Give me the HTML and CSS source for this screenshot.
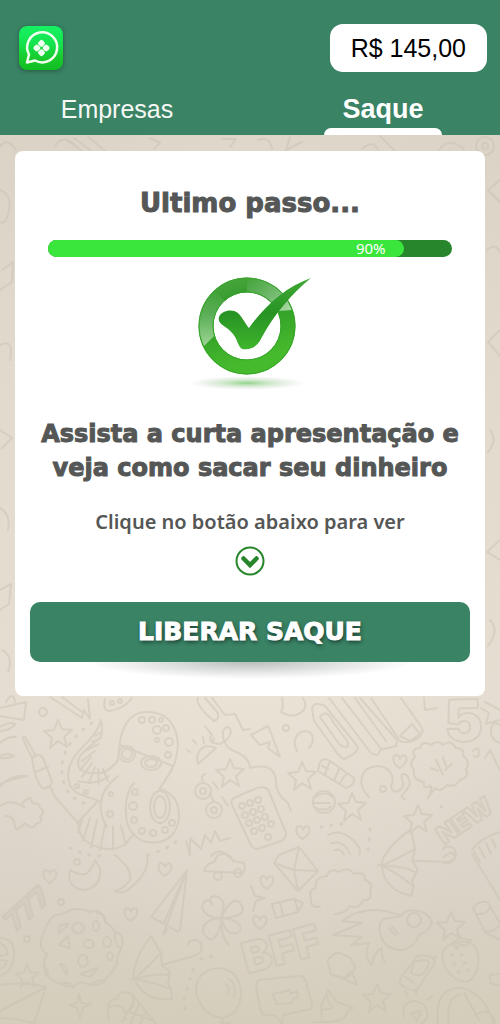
FILE: index.html
```html
<!DOCTYPE html>
<html lang="pt-BR">
<head>
<meta charset="utf-8">
<meta name="viewport" content="width=device-width, initial-scale=1">
<title>Saque</title>
<link rel="stylesheet" href="styles.css">
</head>
<body>
<svg class="doodles" viewBox="0 0 500 1024" preserveAspectRatio="xMidYMin slice" aria-hidden="true">
  <defs>
    <path id="star" d="M0-14L4-5 14-4 6 3 9 13 0 7-8 14-6 4-14-3-4-4Z"/>
    <path id="heart" d="M0 7C-8 3-8-5-4-6-1-6 0-3 0-2 1-6 5-7 6-4 8 0 4 4 0 7Z"/>
    <g id="umbrella"><path d="M-13-33C-31-10-32 8-29 11-23 25-12 32 8 30L7 20 4 15 6 3-2-4-3-16Z"/><path d="M-28 9Q-14-4-3-16M-29 10Q-8 4 4 6M-29 10Q-8 14 7 20M-33 11L-29 9M-2-4L30-13C42-17 38-30 30-29Q24-28 24-24"/></g>
  </defs>
  <!-- strip above and beside the card -->
  <path d="M0 146Q8 137 16 150M55 146Q64 132 78 148M66 140L85 153M74 138L94 153M88 137L108 153M150 138L160 143 154 149M222 139L236 139 230 147M258 140Q270 136 272 149M290 137L286 150 302 142M362 149Q374 138 379 152M380 136L396 152M438 152Q448 135 464 149"/>
  <circle cx="485" cy="146" r="9"/><circle cx="485" cy="146" r="3"/>
  <path d="M0 190Q12 194 9 210T0 222M2 270L13 262 12 282 0 290M0 345Q14 338 10 360M0 430L12 438 2 448M0 508Q11 514 8 530M0 590L11 584 9 604 0 610M2 650Q14 656 8 672M500 180L488 190 500 202M487 250Q496 242 500 252M500 330L488 342 500 356M490 430Q498 440 488 452M500 540L487 552 500 560M490 620Q500 630 488 646"/>
  <!-- upper left -->
  <path d="M0 708L26 702 24 720 0 716M6 702Q13 690 15 702M0 727Q10 721 15 724 12 730 0 731M0 743Q8 736 16 737M0 756Q8 752 14 756 6 759 0 758M0 786Q12 774 27 776 12 779 0 784M50 697L82 718 84 710 90 719 88 699M62 697L82 712M105 699Q102 710 109 711 124 709 132 698"/>
  <circle cx="43" cy="712" r="4"/><circle cx="112" cy="703" r="2"/><circle cx="120" cy="701" r="2"/>
  <use href="#star" x="58" y="734"/><use href="#star" x="230" y="773" />
  <path d="M23 739Q22 736 25 737L36 756 32 758ZM32 758Q39 751 44 760L52 782Q50 790 42 788 35 780 32 758M35 772L48 767M44 788L50 786 55 797 78 823"/>
  <path d="M0 806Q10 798 24 807 19 803 28 799 31 795 32 803 40 803 40 808 46 812 40 817 45 821 36 824 32 831 25 823 17 832 15 828 15 816 6 816 10 811M22 841Q42 823 62 831 62 845 50 854 44 858 30 856M22 841Q22 852 30 856M24 839Q42 847 60 832M60 837Q70 840 55 849M20 857Q45 867 67 844 71 855 51 865 30 870 21 862"/>
  <!-- sunglasses octopus -->
  <path d="M118 760C119 752 118 712 147 712 176 712 182 740 175 762Q170 774 160 788M120 745L173 766 171 772M118 760C112 770 96 776 105 772 82 776 74 768 80 756 94 738 106 744 101 720 96 742 68 752 68 775 68 796 88 796 99 801M109 776Q96 786 78 781M98 801L79 821C74 843 108 857 125 844L134 834C140 843 150 843 159 842 182 838 184 806 171 795Q165 790 159 789M134 783C122 796 124 826 134 835M118 776Q90 798 107 827"/>
  <ellipse cx="127" cy="754" rx="8" ry="8"/><ellipse cx="127" cy="754" rx="5" ry="5"/><ellipse cx="151" cy="763" rx="10" ry="7"/><ellipse cx="151" cy="763" rx="6" ry="4"/>
  <ellipse cx="160" cy="807" rx="10" ry="16"/><ellipse cx="160" cy="807" rx="6" ry="11"/>
  <path d="M100 733L95 736M101 738L92 742M99 744L85 751M95 751L82 761M91 757L80 770M92 763L82 777M95 767L89 783M98 769L99 784M103 769L108 781M83 817L78 833M90 818L83 841M97 820L91 847M105 825L100 850M113 826L113 850M121 826L126 845"/>
  <circle cx="142" cy="720" r="3"/><circle cx="152" cy="720" r="3"/><circle cx="161" cy="720" r="2"/><circle cx="157" cy="730" r="4"/><circle cx="166" cy="728" r="3"/><circle cx="157" cy="740" r="2"/><circle cx="169" cy="742" r="4"/><circle cx="168" cy="755" r="3"/><circle cx="135" cy="792" r="3"/><circle cx="133" cy="806" r="4"/><circle cx="134" cy="820" r="3"/><circle cx="142" cy="831" r="3"/><circle cx="153" cy="833" r="3"/><circle cx="165" cy="830" r="3"/><circle cx="172" cy="823" r="3"/><circle cx="111" cy="794" r="2"/><circle cx="110" cy="814" r="3"/><circle cx="77" cy="786" r="2"/><circle cx="86" cy="792" r="2"/>
  <path class="dotted" d="M92 723Q60 745 62 772T88 804M70 848Q90 858 105 855M148 855Q166 850 178 840"/>
  <!-- centre -->
  <path d="M198 698Q195 705 214 721 219 720 218 713L205 698M212 698L225 715 235 714 243 730 250 729M205 726L212 735Q206 742 220 744 230 740 231 731 228 723 223 731 222 745 232 750 250 757 250 768M250 768Q274 762 276 780 275 794 288 803L291 811M197 758Q200 742 216 748L198 764ZM196 744L193 740M204 743L203 737M212 743L214 738M190 752L187 750"/>
  <circle cx="203" cy="791" r="8"/><circle cx="214" cy="810" r="8"/><circle cx="203" cy="791" r="3"/><circle cx="214" cy="810" r="3"/>
  <path d="M203 783Q200 775 205 774M214 802Q209 793 211 792M213 782L218 789M222 797L228 806M186 841L190 855 190 838 201 849 205 835 211 843 215 831 220 841 230 838M211 856Q220 846 230 858"/>
  <path d="M234 798L257 788Q268 785 270 794L286 833Q286 839 281 841L258 849Q252 849 250 843L232 805Q230 800 234 798Z"/>
  <circle cx="268" cy="837" r="3"/>
  <g><circle cx="242" cy="806" r="3"/><circle cx="250" cy="803" r="3"/><circle cx="258" cy="800" r="3"/><circle cx="245" cy="815" r="3"/><circle cx="253" cy="812" r="3"/><circle cx="261" cy="809" r="3"/><circle cx="249" cy="823" r="3"/><circle cx="257" cy="820" r="3"/><circle cx="265" cy="817" r="3"/><circle cx="254" cy="831" r="3"/><circle cx="262" cy="828" r="3"/><circle cx="271" cy="824" r="3"/></g>
  <path d="M282 698Q284 708 281 712 293 720 304 710 307 704 303 698M251 735L268 726 271 733 280 757 268 748 270 742 260 745ZM297 751C291 740 298 731 306 731 316 733 313 744 309 748 304 746 301 748L297 753ZM311 748L321 743M314 753L319 747"/>
  <circle cx="286" cy="728" r="3"/>
  <use href="#star" x="302" y="776"/><use href="#star" x="352" y="807"/><use href="#star" x="418" y="819"/>
  <path d="M312 708Q314 701 325 706L358 747Q357 754 344 759 340 758 335 750L314 721ZM320 717Q327 708 333 722L348 742Q349 751 339 744ZM329 698L371 753Q379 758 380 750L396 746 397 740 360 698M342 698L382 750M355 698L386 741M371 698L400 741Q406 744 417 739 424 733 422 728L401 698M400 736L412 724 420 734 410 741ZM424 698L425 710 437 708"/>
  <path d="M320 762Q324 757 330 761L354 778Q355 785 346 788L318 771ZM330 761L325 774M339 769L334 781M347 774Q342 778 340 784M322 766L328 769"/>
  <circle cx="324" cy="802" r="11"/><path d="M315 797Q328 790 332 797M314 803L330 803M316 808Q326 812 331 806"/>
  <path d="M369 797C356 784 360 767 378 766 392 767 395 779 391 786 392 797 408 790 402 779 399 772 408 771 410 784 405 795 397 797 405 799 416 801 414 792M369 797Q379 804 371 812 362 823 368 829M380 801Q373 812 381 814 392 817 391 827M391 798Q401 814 411 808M370 783Q374 777 377 782M378 776Q383 782 386 775"/><circle cx="383" cy="789" r="3"/>
  <path d="M414 770Q408 763 415 757 410 749 420 748 422 740 431 745 438 739 443 745 451 739 456 748 465 748 463 756 471 761 466 769 470 777 460 780 455 788 447 785 441 793 435 788L428 798Q432 791 431 786 422 790 424 782 412 780 414 770ZM436 760L443 775M443 757L446 766M445 770L452 764M431 768L438 771"/>
  <text class="letters" x="445" y="742" font-size="58" transform="rotate(-2 445 742)">5</text>
  <text class="letters" x="444" y="845" font-size="25" transform="rotate(-34 444 845)">NEW</text>
  <path d="M485 702L500 710M481 708L489 713 486 724 500 720M500 725Q492 720 491 730T500 743M485 758L490 750 500 770M473 751Q479 745 479 752T474 756M472 850Q480 838 500 832M474 852L480 862M479 847L485 858M486 843L491 854M492 839L496 848"/>
  <use href="#heart" x="400" y="761"/><use href="#heart" x="303" y="832"/>
  <path class="dotted" d="M321 827L348 823M370 829L368 850M441 806L443 809"/>
  <path d="M328 835Q340 828 353 840 363 850 359 855M331 843Q345 840 350 854M335 850Q342 849 344 855M279 855L299 847 318 871 298 891 274 863ZM274 863L294 870 318 871M294 870L299 847M294 870L298 891"/>
  <use href="#umbrella" transform="translate(413 865) rotate(18)"/>
  <path d="M444 857Q453 848 455 858 451 865 444 863"/>
  <!-- lower left -->
  <path d="M70 870Q66 888 84 890 102 887 100 868L95 860Q93 868 86 874 78 875 70 870M115 855Q133 870 130 880 124 889 115 891 123 896 135 884 150 869 147 855M186 836"/>
  <circle cx="77" cy="862" r="3"/><circle cx="61" cy="902" r="3"/><circle cx="27" cy="939" r="3"/>
  <use href="#heart" x="50" y="876"/><use href="#heart" x="165" y="869"/><use href="#heart" x="131" y="914"/><use href="#heart" x="267" y="882"/><use href="#heart" x="260" y="922"/>
  <text class="letters hatched" x="15" y="932" font-size="27" transform="rotate(-42 15 932)">777</text>
  <path d="M47 925Q52 914 62 914 77 905 91 912 101 907 105 921L116 932Q126 935 121 949 116 956 117 964 109 979 97 985 88 985 82 982 68 990 62 984 52 982 46 974 42 963 47 954 37 947 43 935ZM97 913Q107 914 105 923M115 931Q113 942 121 949M43 965Q51 974 46 976M60 984Q70 980 74 988M92 984Q105 976 104 984"/>
  <ellipse cx="78" cy="928" rx="6" ry="5"/><ellipse cx="96" cy="926" rx="3" ry="5"/><ellipse cx="89" cy="944" rx="5" ry="4"/><ellipse cx="107" cy="942" rx="4" ry="5"/><ellipse cx="83" cy="961" rx="5" ry="6"/><ellipse cx="110" cy="956" rx="3" ry="4"/>
  <path d="M59 933Q56 923 69 924ZM59 945L68 936 70 948ZM60 964Q68 964 67 975ZM80 974L98 968 90 977Z"/>
  <path d="M187 870L151 917 163 923 178 932 180 930ZM187 870L164 923M187 870L163 935 168 929M204 871Q206 864 214 862L218 855Q229 851 233 861L244 863Q247 873 240 874M204 871L240 873"/><circle cx="218" cy="876" r="4"/><circle cx="238" cy="873" r="4"/>
  <path d="M221 918C206 919 198 907 204 903 206 898 212 900 212 905 205 893 221 894 223 903 225 906 222 915 221 918 229 900 238 897 241 905 247 912 239 918 221 918 240 919 246 930 236 933 227 935 224 926 221 918 221 930 215 941 209 939 197 930 204 919 221 918M222 919Q220 936 229 945"/>
  <use href="#umbrella" transform="translate(164 969)"/>
  <use href="#star" x="27" y="971" transform="translate(5 180) scale(.82)"/>
  <path d="M0 938Q15 938 14 955 13 971 0 976M0 943Q8 947 7 955L0 956M0 960L7 961Q6 967 0 969M0 985Q25 981 46 987L34 1024M0 1011L46 987M0 1018Q20 1018 35 1024M79 994L81 1003 91 1004 83 1008 80 1018 77 1008 70 1005 77 1003Z"/>
  <path d="M109 1020Q104 999 117 999 119 989 132 994L156 1024M109 1007Q125 1001 126 1019M133 997Q136 1010 124 1012M132 1005L122 1022M139 1004L131 1023M146 1012L140 1024M130 1012L151 1020"/>
  <path d="M196 993Q195 970 219 968 240 970 241 993 240 1013 224 1018 204 1018 196 993ZM224 1018L221 1023 230 1023M229 979Q237 983 234 997M226 984Q231 989 227 994"/>
  <path class="dotted" d="M193 969L184 1000 185 1015M201 959L219 955"/>
  <!-- lower right -->
  <path d="M320 907Q310 908 311 899 308 889 316 888 314 877 327 876 330 867 339 872 348 866 354 874 365 871 365 880 374 883 370 891 373 901 363 900 359 910 350 906 345 914 335 914 332 907ZM327 876Q335 876 333 883 342 882 344 876M316 888Q328 883 333 889M333 896Q340 886 345 893 356 887 360 893M332 907Q334 896 345 900 352 892 359 901M345 874Q355 880 362 883"/>
  <path d="M272 904L294 899 303 903 298 912 276 918ZM280 902L283 916M295 900L298 911M251 886L255 896 265 898 256 901 253 911"/>
  <text class="letters" x="247" y="974" font-size="43" transform="rotate(-15 247 974)">BFF</text>
  <path d="M401 916Q407 908 415 911 426 910 432 922 431 930 419 935 413 950 400 950 386 949 381 937 377 925 383 919ZM401 916Q368 902 342 921L362 923 333 935 362 937 351 945 369 943Q363 958 372 965 374 952 382 948 381 958 385 962 398 950M383 919L368 917 372 924 369 933 381 937M421 911L460 888M428 917L464 893M460 888Q467 878 478 884 481 891 464 893M429 907L433 914M438 902L441 909M447 896L450 903M455 891L459 898"/><circle cx="414" cy="920" r="7"/><path d="M389 928L396 936M392 926L398 934"/>
  <use href="#star" x="451" y="926"/><use href="#star" x="377" y="998"/>
  <path d="M472 854L500 900M473 908Q481 899 488 903L500 923M473 908L485 932 500 940M477 914Q487 915 490 907M485 932Q494 932 500 925"/>
  <path d="M453 944Q440 946 443 962 450 981 467 982 480 975 478 955 476 938 458 943ZM452 943L460 939 457 934 463 939 471 940 465 946 459 944 457 949Z"/>
  <path class="dotted" d="M451 955L466 955M454 964L473 962M458 972L469 970"/>
  <path d="M413 962Q416 953 426 956 437 957 434 964L417 990Q412 992 403 986 397 983 402 976ZM414 962Q430 957 429 964 423 980 411 973ZM434 961L436 956M405 977L414 983"/>
  <path d="M330 969Q325 960 331 957 336 950 344 955 353 958 352 962 358 967 352 973 348 980 336 976 329 976 330 969ZM338 976L357 985 352 972M344 979L350 972"/>
  <path d="M258 980L298 976Q304 975 306 982L312 1004Q312 1010 306 1010L283 1015 282 1024 276 1016 266 1015Q261 1014 260 1008L256 986ZM273 994L290 990 290 994 297 991 298 997 293 999 292 1003 276 1004ZM322 1017L321 1006 328 990 337 1002 345 1005 353 1008 347 1012Q347 1020 330 1022L313 1022M328 990Q325 1000 333 1008L323 1010"/>
  <path d="M404 1017Q401 1001 415 1001 429 1003 427 1018L421 1024M408 996L405 991M416 995L416 988M427 1000L432 996M411 1013L421 1011 417 1021ZM438 1024Q434 987 461 988 484 992 494 1024M449 1024Q445 998 460 995M464 993L479 1020M475 1015Q490 1006 495 1022M500 974L490 975 490 983 500 986"/>
</svg>

<header class="header">
  <div class="header__top">
    <svg class="logo" viewBox="0 0 44 44" role="img" aria-label="Logo">
      <defs><linearGradient id="logoFill" x1="0" y1="0" x2="0" y2="1"><stop offset="0" stop-color="#16f263"/><stop offset=".4" stop-color="#14e34e"/><stop offset=".75" stop-color="#18c92b"/><stop offset="1" stop-color="#10be20"/></linearGradient></defs>
      <rect width="44" height="44" rx="8" fill="url(#logoFill)"/>
      <path d="M10 28.500A15 15 0 1 1 16 34.500L8 36.500Z" fill="none" stroke="#f2fff0" stroke-width="2.500" stroke-linejoin="round"/>
      <g fill="#f2fff0" transform="rotate(45 22.500 22)"><rect x="16.200" y="15.700" width="6" height="6" rx="2"/><rect x="22.800" y="15.700" width="6" height="6" rx="2"/><rect x="16.200" y="22.300" width="6" height="6" rx="2"/><rect x="22.800" y="22.300" width="6" height="6" rx="2"/></g>
    </svg>
    <div class="balance">R$ 145,00</div>
  </div>
  <nav class="tabs">
    <a class="tab" href="#empresas">Empresas</a>
    <a class="tab tab--active" href="#saque" aria-current="page">Saque</a>
  </nav>
</header>

<main class="main">
  <section class="card" id="saque">
    <h1 class="title">Ultimo passo...</h1>
    <div class="progress" role="progressbar" aria-label="Progresso" aria-valuenow="90" aria-valuemin="0" aria-valuemax="100">
      <div class="progress__fill">90%</div>
    </div>
    <svg class="check" viewBox="0 0 140 130" aria-hidden="true">
      <defs>
        <linearGradient id="ring" x1="0" y1="0" x2=".3" y2="1"><stop offset="0" stop-color="#49a53d"/><stop offset=".35" stop-color="#2c9827"/><stop offset="1" stop-color="#46ba2d"/></linearGradient>
        <linearGradient id="tick" x1="0" y1="0" x2="0" y2="1"><stop offset="0" stop-color="#3fa935"/><stop offset=".5" stop-color="#279323"/><stop offset="1" stop-color="#40b52d"/></linearGradient>
        <linearGradient id="shineLeft" x1="0" y1="0" x2="0" y2="1"><stop offset="0" stop-color="#fff" stop-opacity="0"/><stop offset="1" stop-color="#fff" stop-opacity=".5"/></linearGradient>
        <linearGradient id="shineRight" x1="0" y1="0" x2="1" y2="1"><stop offset="0" stop-color="#fff" stop-opacity="0"/><stop offset="1" stop-color="#fff" stop-opacity=".6"/></linearGradient>
        <radialGradient id="ground"><stop offset="0" stop-color="#75c96b" stop-opacity=".8"/><stop offset=".5" stop-color="#b5dab0" stop-opacity=".5"/><stop offset="1" stop-color="#ccc" stop-opacity="0"/></radialGradient>
      </defs>
      <ellipse cx="67" cy="118" rx="58" ry="7" fill="url(#ground)"/>
      <circle cx="67" cy="61" r="41" fill="none" stroke="url(#ring)" stroke-width="15"/>
      <path d="M19 52A49 49 0 0 1 34 25L45 36A34 34 0 0 0 34 71L24 81A49 49 0 0 1 19 52Z" fill="url(#shineLeft)"/>
      <path d="M67 12A49 49 0 0 1 112 45L98 46A34 34 0 0 0 67 27Z" fill="url(#shineRight)"/>
      <circle cx="67" cy="61" r="48" fill="none" stroke="#37a52a"/>
      <circle cx="67" cy="61" r="34" fill="none" stroke="#37a52a"/>
      <path d="M39 52C41 46 52 43 58 48 63 53 66 60 69 63 84 42 105 22 131 13 112 28 94 50 82 72 77 82 72 85 62 84 57 80 58 75 53 69 46 60 37 60 39 52Z" fill="url(#tick)"/>
    </svg>
    <h2 class="subtitle">Assista a curta apresentação e veja como sacar seu dinheiro</h2>
    <p class="hint">Clique no botão abaixo para ver</p>
    <svg class="chevron" viewBox="0 0 30 30" aria-hidden="true"><circle cx="15" cy="15" r="13.500" fill="none" stroke="#27852c" stroke-width="2"/><path d="M8.500 12.500L15 19L21.500 12.500" fill="none" stroke="#27852c" stroke-width="4.500" stroke-linecap="round" stroke-linejoin="miter"/></svg>
    <div class="action"><button class="button" type="button">LIBERAR SAQUE</button></div>
  </section>
</main>
</body>
</html>
```
FILE: styles.css
```css
* { box-sizing: border-box; }

body {
  position: relative;
  min-height: 100vh;
  margin: 0;
  overflow-x: hidden;
  background:
    radial-gradient(ellipse 60% 50% at 50% 50%, rgba(245, 238, 224, 0.5), rgba(245, 238, 224, 0)),
    linear-gradient(#d8d0c3, #dfd7c9 30%, #e4dcd0 68%, #dad3c7 86%, #d4cdbb);
  color: #555756;
  font-family: "DejaVu Sans", sans-serif;
}

.doodles {
  position: absolute;
  inset: 0;
  width: 100%;
  height: 100%;
  fill: none;
  stroke: #c6bfb0;
  stroke-width: 2;
  stroke-linecap: round;
  stroke-linejoin: round;
  opacity: 0.42;
}

.dotted { stroke-width: 3; stroke-dasharray: 1 9; }
.letters { font-family: Inter, sans-serif; font-weight: 900; }
.hatched { fill: #d0c9ba; }

.header {
  position: relative;
  padding-top: 24px;
  background: #3a8365;
}

.header__top {
  display: flex;
  align-items: center;
  justify-content: space-between;
  padding: 0 13px 0 19px;
}

.logo {
  width: 44px;
  height: 44px;
  border-radius: 8px;
  box-shadow: 0 1px 4px rgba(0, 0, 0, 0.35);
}

.balance {
  padding: 0 21px;
  border-radius: 13px;
  background: #fff;
  color: #000;
  font: 25px/48px "Liberation Sans", sans-serif;
}

.tabs {
  display: flex;
  justify-content: space-between;
  padding: 18px 58px 0;
}

.tab {
  display: flex;
  flex-direction: column;
  width: 118px;
  color: #f6f8f6;
  font: 25px/38px "Liberation Sans", sans-serif;
  text-align: center;
  text-decoration: none;
}

.tab--active {
  color: #fff;
  font-size: 27px;
  font-weight: 700;
}

.tab::after {
  height: 7px;
  border-radius: 7px 7px 0 0;
  content: "";
}

.tab--active::after { background: #fff; }

.main {
  position: relative;
  padding: 16px 15px;
}

.card {
  display: flex;
  flex-direction: column;
  align-items: center;
  padding: 32px 15px 34px;
  border-radius: 8px;
  background: #fff;
}

.title,
.subtitle,
.button {
  font-weight: 700;
  -webkit-text-stroke: 1px currentColor;
}

.title {
  margin: 0;
  font-size: 26px;
  line-height: 40px;
}

.progress {
  align-self: stretch;
  margin: 17px 18px 0;
  border-radius: 9px;
  background: #27852c;
}

.progress__fill {
  width: 88%;
  padding-right: 18px;
  border-radius: 9px;
  background: #3be63c;
  color: #fff;
  font: 15px/17px "Noto Sans", sans-serif;
  text-align: right;
}

.check {
  width: 140px;
  height: 130px;
  margin-top: 8px;
}

.subtitle {
  margin: 22px 0 0;
  font-size: 24px;
  line-height: 34px;
  text-align: center;
}

.hint {
  margin: 22px 0 0;
  font: 600 20px/30px "Noto Sans", sans-serif;
}

.chevron {
  width: 30px;
  height: 30px;
  margin-top: 9px;
}

.action {
  position: relative;
  align-self: stretch;
  margin-top: 26px;
}

.action::before {
  position: absolute;
  right: 13%;
  bottom: -17px;
  left: 13%;
  height: 34px;
  background: radial-gradient(closest-side, rgba(60, 65, 65, 0.35), rgba(60, 65, 65, 0));
  content: "";
}

.button {
  position: relative;
  width: 100%;
  padding: 0;
  border: 0;
  border-radius: 10px;
  background: #3a8365;
  color: #fff;
  font-family: inherit;
  font-size: 25px;
  line-height: 60px;
  text-shadow: 1px 2px 4px rgba(0, 0, 0, 0.6);
  cursor: pointer;
}
```
